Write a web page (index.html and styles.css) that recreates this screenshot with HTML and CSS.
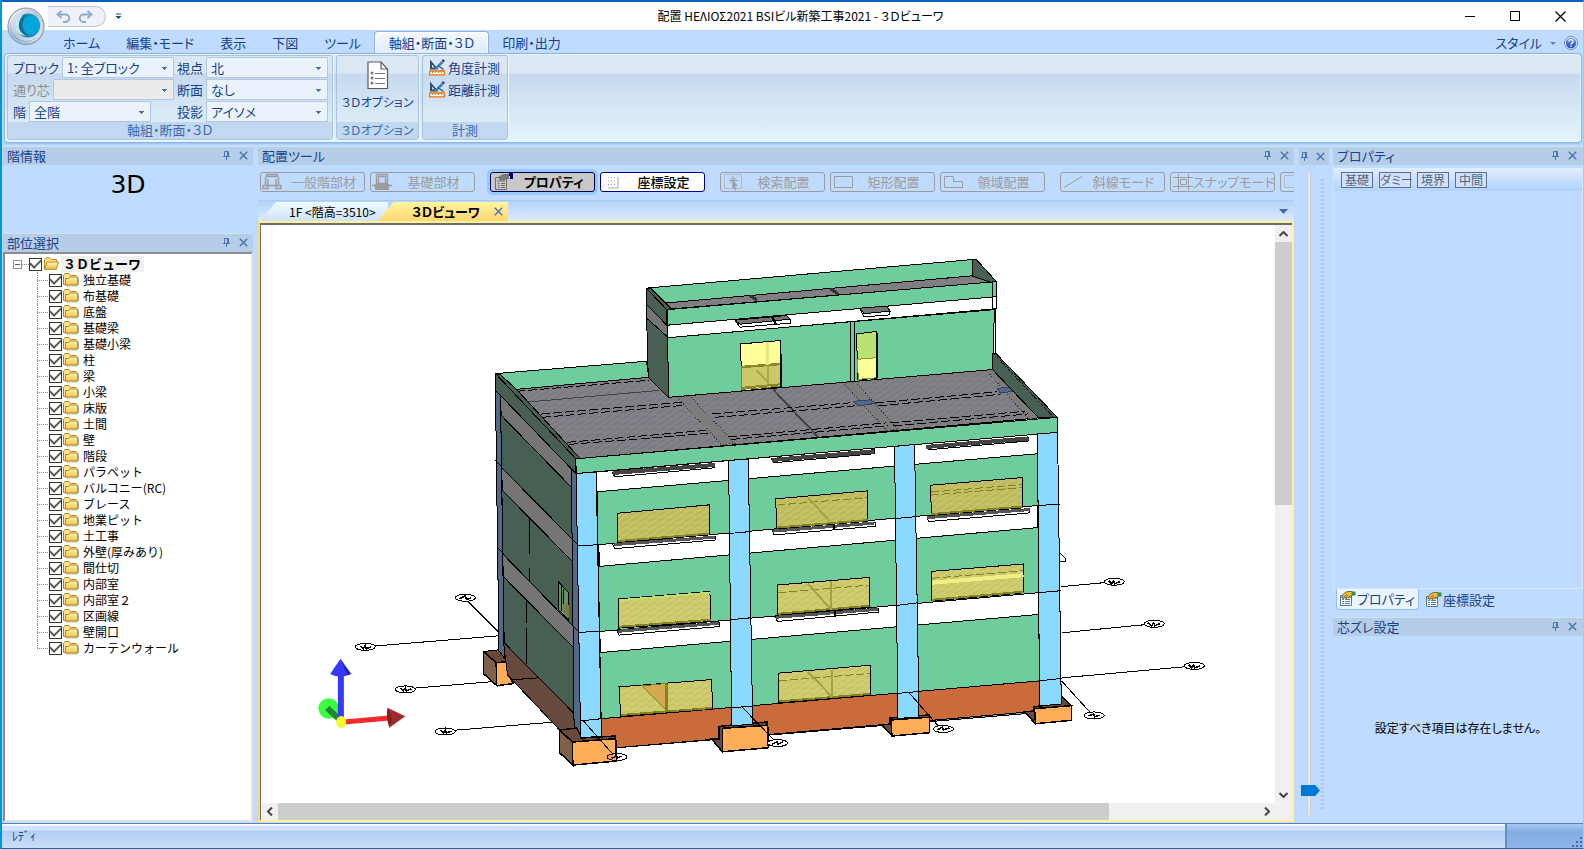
FILE: index.html
```html
<!DOCTYPE html>
<html lang="ja">
<head>
<meta charset="utf-8">
<title>配置 HEΛIOΣ2021 BSIビル新築工事2021 - ３Ｄビューワ</title>
<link rel="stylesheet" href="styles.css">
</head>
<body>
<svg class="defs" aria-hidden="true">
  <defs>
    <linearGradient id="gFold" x1="0" y1="0" x2="0" y2="1"><stop offset="0" stop-color="#fff6c0"/><stop offset="1" stop-color="#f2bf3c"/></linearGradient>
    <linearGradient id="gRing" x1="0" y1="0" x2="1" y2="1"><stop offset="0" stop-color="#f4f6f8"/><stop offset=".5" stop-color="#b9c6d4"/><stop offset="1" stop-color="#eef2f5"/></linearGradient>
    <linearGradient id="gHelp" x1="0" y1="0" x2="0" y2="1"><stop offset="0" stop-color="#6b9cf0"/><stop offset="1" stop-color="#1c46bd"/></linearGradient>
    <pattern id="hatch" width="9" height="6" patternUnits="userSpaceOnUse"><rect width="9" height="6" fill="#828282"/><path d="M0 5L9 1" stroke="#74748e" stroke-width="1.4"/></pattern>
    <pattern id="glass" width="9" height="6" patternUnits="userSpaceOnUse"><rect width="9" height="6" fill="#c4c264"/><path d="M0 5L9 1" stroke="#b5b25c" stroke-width="1.2"/></pattern>
    <pattern id="glass2" width="9" height="6" patternUnits="userSpaceOnUse"><rect width="9" height="6" fill="#cfcd6e"/><path d="M0 5L9 1" stroke="#c2bf68" stroke-width="1.2"/></pattern>
  </defs>
  <symbol id="folder" viewBox="0 0 16 14">
    <path d="M2 12.8h12.5l1-1V5" fill="none" stroke="#a9a9a9"/>
    <path d="M.5 11.5v-9l1.5-2h4l1.5 2h5.5l1 1.2v7.8z" fill="#fbe290" stroke="#b98a1c"/>
    <path d="M2.5 12V5.5h3.3l1-1.5h7.7v8z" fill="url(#gFold)" stroke="#c0901f"/>
  </symbol>
  <symbol id="folder-open" viewBox="0 0 16 14">
    <path d="M1.5 12V2.5L3 .8h3.5L8 2.5h5.5V5" fill="#fbe290" stroke="#b98a1c"/>
    <path d="M1.5 12.3L4 5h11.6l-2.4 7.3z" fill="url(#gFold)" stroke="#b98a1c"/>
  </symbol>
  <symbol id="pin" viewBox="0 0 9 9"><path d="M2.5 5.5V.5h4v5M5.5 1v4M1 5.5h7M4.5 6v3" fill="none" stroke="#4a76b5"/></symbol>
  <symbol id="cross" viewBox="0 0 9 9"><path d="M.8.8l7.400 7.400M8.200.8L.8 8.200" fill="none" stroke="#4a76b5" stroke-width="1.5"/></symbol>
  <symbol id="measure" viewBox="0 0 16 17">
    <path d="M1 .5L9.500 10.500H1zM3 5.500v3h2.500z" fill="#33506a" fill-rule="evenodd"/>
    <path d="M6.500 8l6-6 1.900 1.900-6 5.600-2.600.9z" fill="#3f7fc0"/><path d="M12.500 1.500l1.500-1.500 2 2-1.500 1.500z" fill="#24445f"/><path d="M9.500 7l5 3.500" stroke="#33506a" stroke-width="1.200"/>
    <path d="M.7 12h14.600v3.800H.7z" fill="#fff" stroke="#e87511" stroke-width="1.300"/><path d="M3.500 12v2M6.500 12v2M9.500 12v2M12.500 12v2" stroke="#e87511"/>
  </symbol>
  <symbol id="props" viewBox="0 0 17 16">
    <path d="M1.5 4.500h11v10h-11z" fill="#fff" stroke="#55789f"/><path d="M2 6.500h10" stroke="#7ca0cc" stroke-width="1.500"/>
    <path d="M3 8.500h2M6 8.500h5M3 10.500h2M6 10.500h5M3 12.500h2M6 12.500h5" stroke="#55789f"/>
    <path d="M3 5l3-3.500 3-1h4v4.500l-3 .5-2 2-2-1-2 1z" fill="#f0c238" stroke="#6b4b10" stroke-width=".8"/><path d="M5 6l3-3M7 7l2-3" stroke="#6b4b10" stroke-width=".7"/><path d="M13 .5h3.500v4H13z" fill="#3a8e50"/>
  </symbol>
</svg>

<div class="window">
  <header class="titlebar">
    <div class="quick">
      <button class="qbtn" aria-label="元に戻す"><svg width="15" height="13" viewBox="0 0 15 13"><path d="M5.500 1L1.500 4.500l4 3.500M2 4.500h7.500a3.600 3.600 0 0 1 0 7.500H7" fill="none" stroke="#8fadd0" stroke-width="2"/></svg></button>
      <button class="qbtn" aria-label="やり直し"><svg width="15" height="13" viewBox="0 0 15 13"><path d="M9.500 1l4 3.500-4 3.500M13 4.500H5.500a3.600 3.600 0 0 0 0 7.500H8" fill="none" stroke="#8fadd0" stroke-width="2"/></svg></button>
    </div>
    <button class="qmore" aria-label="カスタマイズ"><svg width="7" height="7" viewBox="0 0 7 7"><path d="M1 1h5" stroke="#15428b"/><path d="M.5 3h6L3.500 6z" fill="#15428b"/></svg></button>
    <h1 class="caption">配置 HEΛIOΣ2021 BSIビル新築工事2021 - ３Ｄビューワ</h1>
    <div class="winbtns">
      <button aria-label="最小化"><svg width="11" height="11"><path d="M0 5.500h10" stroke="#000"/></svg></button>
      <button aria-label="最大化"><svg width="11" height="11"><path d="M.5 .5h9v9h-9z" fill="none" stroke="#000"/></svg></button>
      <button aria-label="閉じる"><svg width="11" height="11"><path d="M.5 .5l10 10M10.500 .5l-10 10" stroke="#000" stroke-width="1.200"/></svg></button>
    </div>
  </header>
  <button class="orb" aria-label="アプリケーション"><svg width="40" height="40" viewBox="0 0 40 40">
    <circle cx="20" cy="21" r="18.500" fill="#8a97a6" opacity=".5"/><circle cx="20" cy="20" r="18" fill="url(#gRing)" stroke="#8795a5"/>
    <path d="M5 15a15.500 15.500 0 0 0 26 16a16 16 0 0 1-26-16z" fill="#4ba9c9" opacity=".6"/>
    <circle cx="22" cy="19.500" r="12" fill="#1690bd"/>
    <path d="M17 9c-6 6-5 16 3 21c-9-1-13-8-10-15c1.500-4 4-6 7-6z" fill="#c5e8f2"/>
    <path d="M21 8.500c-6 5-6 16 3 22.500c-9-2-12-8-11-13c.8-4 4-9 8-9.500z" fill="#10708f"/>
    <ellipse cx="25" cy="19" rx="8.500" ry="9.500" fill="#06a5da"/>
  </svg></button>

  <nav class="tabs">
    <button>ホーム</button><button>編集・モード</button><button>表示</button><button>下図</button><button>ツール</button><button class="active">軸組・断面・３Ｄ</button><button>印刷・出力</button>
    <button class="style">スタイル<i class="arr"></i></button>
    <button class="help" aria-label="ヘルプ"><svg width="14" height="14" viewBox="0 0 14 14"><circle cx="7" cy="7" r="6.500" fill="#eef3fb" stroke="#6f87ac"/><circle cx="7" cy="7" r="5.200" fill="url(#gHelp)"/><path d="M5 5.600a2 2 0 1 1 3 1.600q-1 .6-1 1.400M7 9.600v1.400" fill="none" stroke="#fff" stroke-width="1.400"/></svg></button>
  </nav>

  <section class="ribbon">
    <div class="group">
      <div class="gbody combos">
        <div class="ccol wide">
          <div class="crow"><label for="c1">ブロック</label><select id="c1"><option>1: 全ブロック</option></select></div>
          <div class="crow"><label for="c2" class="off">通り芯</label><select id="c2" disabled><option></option></select></div>
          <div class="crow"><label for="c3">階</label><select id="c3"><option>全階</option></select></div>
        </div>
        <div class="ccol">
          <div class="crow"><label for="c4">視点</label><select id="c4"><option>北</option></select></div>
          <div class="crow"><label for="c5">断面</label><select id="c5"><option>なし</option></select></div>
          <div class="crow"><label for="c6">投影</label><select id="c6"><option>アイソメ</option></select></div>
        </div>
      </div>
      <div class="glabel">軸組・断面・３Ｄ</div>
    </div>
    <div class="group small">
      <div class="gbody"><button class="big"><svg width="22" height="29" viewBox="0 0 22 29"><path d="M1 1h13l6.500 7v19.500H1z" fill="#fff" stroke="#5a5a5a" stroke-width="1.200"/><path d="M14 1v7h6.500" fill="none" stroke="#5a5a5a" stroke-width="1.200"/><g fill="#777"><circle cx="5" cy="12" r="1.500"/><circle cx="5" cy="17" r="1.500"/><circle cx="5" cy="22" r="1.500"/></g><path d="M8 12.500h10M8 17.500h10M8 22.500h10" stroke="#777"/></svg><span>３Ｄオプション</span></button></div>
      <div class="glabel">３Ｄオプション</div>
    </div>
    <div class="group">
      <div class="gbody list">
        <button><svg width="16" height="17"><use href="#measure"/></svg>角度計測</button>
        <button><svg width="16" height="17"><use href="#measure"/></svg>距離計測</button>
      </div>
      <div class="glabel">計測</div>
    </div>
  </section>

  <main class="work">
    <aside class="left">
      <section class="dock info">
        <h2>階情報<span class="dbtn"><button aria-label="固定"><svg width="9" height="9"><use href="#pin"/></svg></button><button aria-label="閉じる"><svg width="9" height="9"><use href="#cross"/></svg></button></span></h2>
        <p class="floor">3D</p>
      </section>
      <section class="dock parts">
        <h2>部位選択<span class="dbtn"><button aria-label="固定"><svg width="9" height="9"><use href="#pin"/></svg></button><button aria-label="閉じる"><svg width="9" height="9"><use href="#cross"/></svg></button></span></h2>
        <div class="tree">
          <div class="root"><button class="exp" aria-label="折りたたむ"></button><label><input type="checkbox" checked><svg width="16" height="14"><use href="#folder-open"/></svg><b>３Ｄビューワ</b></label></div>
          <ul>
            <li><label><input type="checkbox" checked><svg width="16" height="14"><use href="#folder"/></svg>独立基礎</label></li>
            <li><label><input type="checkbox" checked><svg width="16" height="14"><use href="#folder"/></svg>布基礎</label></li>
            <li><label><input type="checkbox" checked><svg width="16" height="14"><use href="#folder"/></svg>底盤</label></li>
            <li><label><input type="checkbox" checked><svg width="16" height="14"><use href="#folder"/></svg>基礎梁</label></li>
            <li><label><input type="checkbox" checked><svg width="16" height="14"><use href="#folder"/></svg>基礎小梁</label></li>
            <li><label><input type="checkbox" checked><svg width="16" height="14"><use href="#folder"/></svg>柱</label></li>
            <li><label><input type="checkbox" checked><svg width="16" height="14"><use href="#folder"/></svg>梁</label></li>
            <li><label><input type="checkbox" checked><svg width="16" height="14"><use href="#folder"/></svg>小梁</label></li>
            <li><label><input type="checkbox" checked><svg width="16" height="14"><use href="#folder"/></svg>床版</label></li>
            <li><label><input type="checkbox" checked><svg width="16" height="14"><use href="#folder"/></svg>土間</label></li>
            <li><label><input type="checkbox" checked><svg width="16" height="14"><use href="#folder"/></svg>壁</label></li>
            <li><label><input type="checkbox" checked><svg width="16" height="14"><use href="#folder"/></svg>階段</label></li>
            <li><label><input type="checkbox" checked><svg width="16" height="14"><use href="#folder"/></svg>パラペット</label></li>
            <li><label><input type="checkbox" checked><svg width="16" height="14"><use href="#folder"/></svg>バルコニー(RC)</label></li>
            <li><label><input type="checkbox" checked><svg width="16" height="14"><use href="#folder"/></svg>ブレース</label></li>
            <li><label><input type="checkbox" checked><svg width="16" height="14"><use href="#folder"/></svg>地業ピット</label></li>
            <li><label><input type="checkbox" checked><svg width="16" height="14"><use href="#folder"/></svg>土工事</label></li>
            <li><label><input type="checkbox" checked><svg width="16" height="14"><use href="#folder"/></svg>外壁(厚みあり)</label></li>
            <li><label><input type="checkbox" checked><svg width="16" height="14"><use href="#folder"/></svg>間仕切</label></li>
            <li><label><input type="checkbox" checked><svg width="16" height="14"><use href="#folder"/></svg>内部室</label></li>
            <li><label><input type="checkbox" checked><svg width="16" height="14"><use href="#folder"/></svg>内部室２</label></li>
            <li><label><input type="checkbox" checked><svg width="16" height="14"><use href="#folder"/></svg>区画線</label></li>
            <li><label><input type="checkbox" checked><svg width="16" height="14"><use href="#folder"/></svg>壁開口</label></li>
            <li><label><input type="checkbox" checked><svg width="16" height="14"><use href="#folder"/></svg>カーテンウォール</label></li>
          </ul>
        </div>
      </section>
    </aside>

    <section class="center">
      <h2 class="dockhead">配置ツール<span class="dbtn"><button aria-label="固定"><svg width="9" height="9"><use href="#pin"/></svg></button><button aria-label="閉じる"><svg width="9" height="9"><use href="#cross"/></svg></button></span></h2>
      <div class="toolbar">
        <button class="tool" disabled><svg width="22" height="18" viewBox="0 0 22 18"><path d="M5.500 1.500h11v2h-11zM4.500 4v9M17.500 4v9M7 6v6M15 6v6M2 12.500h5v3H2zM15 12.500h5v3h-5zM7 12.500h8" fill="none" stroke="#9c9c9c" stroke-width="1.400"/></svg><span>一般階部材</span></button>
        <button class="tool" disabled><svg width="22" height="18" viewBox="0 0 22 18"><path d="M5.500 1.500h11v9h-11zM7.500 3.500v7M14.500 3.500v7M7 3.500h8M1 12.500h20" fill="none" stroke="#9c9c9c" stroke-width="1.400"/><path d="M4 11h14v6H4z" fill="#9c9c9c"/></svg><span>基礎部材</span></button>
        <i class="sep"></i>
        <button class="tool pressed"><svg width="22" height="18" viewBox="0 0 22 18"><path d="M4.500 4.500h11v12h-11zM6 8h8M7 10.500h1.500M10 10.500h4M7 12.500h1.500M10 12.500h4M7 14.500h1.500M10 14.500h4" fill="none" stroke="#6e6e6e"/><path d="M7 4l5-3h6v5h-3l-2 2-2-1-2 1z" fill="#777"/><path d="M18 0h4v6h-3V3h-1z" fill="#000080"/></svg><span>プロパティ</span></button>
        <button class="tool on"><svg width="22" height="18" viewBox="0 0 22 18"><path d="M7 4.500h9M7 8h9M7 11.500h9" stroke="#999" stroke-dasharray="1 2"/><path d="M17 4v11H7" fill="none" stroke="#aaa"/></svg><span>座標設定</span></button>
        <i class="sep"></i>
        <button class="tool" disabled><svg width="22" height="18" viewBox="0 0 22 18"><path d="M3.500 1.500h17v14h-17z" fill="none" stroke="#9c9c9c" stroke-dasharray="1 1"/><path d="M12 3v9M8 7.500h9M9 4.500l6 6M15 4.500l-6 6" stroke="#9c9c9c"/><path d="M12 8l5 5-3 .3L15.500 17l-1.500.5-1.200-3L11 16z" fill="#9c9c9c"/></svg><span>検索配置</span></button>
        <button class="tool" disabled><svg width="22" height="18" viewBox="0 0 22 18"><path d="M3.500 3.500h18v11h-18z" fill="none" stroke="#9c9c9c"/></svg><span>矩形配置</span></button>
        <button class="tool" disabled><svg width="22" height="18" viewBox="0 0 22 18"><path d="M3.500 3.500h9v5h9v6h-18z" fill="none" stroke="#9c9c9c"/></svg><span>領域配置</span></button>
        <i class="sep"></i>
        <button class="tool" disabled><svg width="22" height="18" viewBox="0 0 22 18"><path d="M3 14.500L21 3.500" stroke="#9c9c9c"/></svg><span>斜線モード</span></button>
        <button class="tool" disabled><svg width="22" height="18" viewBox="0 0 22 18"><path d="M7.500 1v16M17.500 1v16M2 4.500h20M2 13.500h20M9.500 6.500h6v5h-6z" fill="none" stroke="#9c9c9c"/></svg><span>スナップモード</span></button>
        <button class="tool" disabled aria-label="範囲"><svg width="22" height="18" viewBox="0 0 22 18"><path d="M3.500 2.500h20v12h-20z" fill="none" stroke="#9c9c9c" stroke-dasharray="1 1"/></svg></button>
      </div>
      <div class="doctabs">
        <button class="doc">1F &lt;階高=3510&gt;</button>
        <button class="doc cur">３Ｄビューワ<svg width="9" height="9"><use href="#cross"/></svg></button>
        <button class="drop" aria-label="一覧"><svg width="9" height="5"><path d="M0 0h9L4.500 5z" fill="#3f6cae"/></svg></button>
      </div>
      <div class="viewer">
        <svg class="scene" viewBox="262 225 1012 576" preserveAspectRatio="xMinYMin meet" shape-rendering="crispEdges" role="img" aria-label="建物の３Ｄビュー">
          <g stroke="#000" stroke-width="1" fill="none">
            <path d="M366 646L499 635M406 688L538 677M446 730L580 719M469 601L504 636M1060 586L1103 582M1061 632L1143 624M1061 677L1183 666M1061 680L1090 712"/>
            <path d="M1059 551.700l6 6v3.500h-6z" fill="#fff"/>
          </g>
          <g stroke="#000">
            <path d="M484 650.700L499.500 649 508 661 496.700 661.700z" fill="#68493a"/>
            <path d="M484 650.700L496.700 661.700 497.300 684.700 484 672.700z" fill="#80604a" stroke-width="1.500"/>
            <path d="M496.700 661.700L508 661 508.300 673 514 682.700 497.300 684.700z" fill="#ffad57" stroke-width="1.500"/>
            <path d="M504 641L581 717V735L560 729 508 674z" fill="#654a3d"/>
            <path d="M501 395L572 468 575 713 504.700 642z" fill="#486054"/>
            <path d="M501 395L572 468V487L501.700 415zM502 467L574 540V562L503 490zM503 553L574 626V647L504 576z" fill="#757575"/>
            <path d="M496 390L501 395 504.700 657 499.500 650z" fill="#526a87"/>
            <path d="M571.700 468L576.500 473 581 737 574.500 728z" fill="#526a87"/>
            <path d="M496 460L503 467M498 547L504 553M571 537L577 543M573 625L579 631"/>
            <path d="M529.500 517V553M530.300 567V580M526.700 598V622M527 627V663M538 677L511 679"/>
            <path d="M558.500 580.700L569.300 592.300V620L558.500 608z" fill="#668f63"/><path d="M561.500 585V610M564 588V603" fill="none"/><path d="M564 604h5v13l-5-6z" fill="#777a45" stroke="none"/>
            <path d="M496 373.300L646.700 361 649 377 517 389z" fill="#6fcc9d"/>
            <path d="M517 389L649 377 668.500 397 992 369.300 1038 417.500 580 458z" fill="url(#hatch)"/>
          </g>
          <g stroke="#333" fill="#7c7c7c">
            <path d="M676.700 396.500L690 395.500 735 443 721.700 444zM842.700 382.500L855 381.500 898 429 886.700 430zM986 370L992 369.300 1038 417.500 1028 418.500z" stroke-dasharray="1 2"/>
            <path d="M773 389L818 436.500" stroke="#444" stroke-width="2"/>
            <g fill="none" stroke="#000" stroke-dasharray="9 3"><path d="M541.700 413.700L681.700 402M542 417L684 405M567 442L706 430M569 444L708 433M711.700 413.700L850 402.500M715 417L855 405.500M875 402.500L997 391.500M878 405.500L1000 394M728 436.500L886 422.500M731 439L888 425.500M890 422.500L1024 411M893 425.500L1028 413.500"/><path d="M517 391L649 380"/></g>
            <path d="M528 401.700L660 390" stroke="#444"/>
            <path d="M853 401L870 399.500 876 403 858 405.500zM996.700 388L1010 387 1015 390.700 1000 392.700z" fill="#526a87" stroke="#30455f"/>
          </g>
          <g stroke="#000">
            <path d="M992 353.700H996L1056.700 417 1038 417.500 992 369.300z" fill="#486054"/><path d="M994 354L1053 417" stroke-dasharray="1 1" fill="none"/>
            <path d="M496 373.300L501 374.500 517 389 580.500 458 576.300 458.300V473L496 390z" fill="#486054"/><path d="M496 373.300L576.300 458.300" fill="none"/>
            <path d="M646.500 304L668 325 668.500 397 648.500 377z" fill="#486054"/>
            <path d="M646.500 304L668 325V337L647 318z" fill="#757575"/>
            <path d="M668 337L994 309.500 992 369.300 668.500 397z" fill="#6fcc9d"/><path d="M995 309V354" stroke-width="1.500"/>
            <path d="M668 325L996 296V308.500L668 337.500z" fill="#fff"/>
            <path d="M646.500 288L972 259.500V275.700L664 303z" fill="#6fcc9d"/>
            <path d="M664 303L972 275.700 992 282 668 309z" fill="url(#hatch)"/>
            <path d="M750 295.500L757 300M830 288.500L838 294" stroke="#333" stroke-width="3"/>
            <path d="M972 259.500H976L996 281.500 990 282 972 276z" fill="#486054"/>
            <path d="M646.500 288L651 288 672 309 667 309.500V325L646.500 304z" fill="#486054"/><path d="M646.500 288L667 309.500" fill="none"/>
            <path d="M667.500 309.500L996 281.500V296.500L667.500 325z" fill="#6fcc9d"/><path d="M992 282V309" />
            <path d="M735 320L786.700 315.300 790 319V323L740 327z" fill="#fff"/><path d="M735 320L786.700 315.300 790 319 740 324z" fill="#757575"/><path d="M772 316.500l4 8" stroke-width="2"/>
            <path d="M859.300 308L886.700 306 889.700 311V314.700L864 316.700z" fill="#fff"/><path d="M859.300 308L886.700 306 889.700 311 864 313.500z" fill="#757575"/>
            <path d="M850 321.500V382M854 321V381"/>
            <path d="M740.700 343.700L780.700 340.300V386.700L741.700 390.700z" fill="#ffff98"/><path d="M741.500 366L780 363V386L742 389z" fill="#cbc865" stroke="#86831f"/><path d="M741.500 367L780 364M742 387.500L780 384" stroke="#8b872a" stroke-width="2"/><path d="M756 370L768 382M768 366V384" stroke="#a9a64c" stroke-width="2"/><path d="M766 342.500h3v22h-3z" fill="#e8e584" stroke="none"/><path d="M781 354V387" stroke-width="2"/>
            <path d="M856.300 333.700L876.300 331.300 876.700 378 857.700 379.300z" fill="#b9e36e"/><path d="M857.500 359L876 357.500V377.500L858 379z" fill="#ffff98" stroke="#97932c"/><path d="M876.500 333V378" stroke-width="2"/>
          </g>
          <g stroke="#000">
            <path d="M597 471.500L1037 433.500 1039 711.500 602 748z" fill="#6fcc9d"/>
            <path d="M597 471.500L1037 433.500V453.300L597 491.300zM599 544L1037 505V527L600 565.700zM600 630.700L1038 592V613.700L601 651.700z" fill="#fff"/>
            <path d="M602 717.700L1039 680V710L602 748z" fill="#c96b3b"/>
            <path d="M612.700 471.700L715 463.300V467.300L615 476.300zM771.700 458.300L874 449.300V453.300L773.500 462.300zM926 445L1028.300 436.700V440.500L928.300 449.300z" fill="#fff"/>
            <path d="M613 472.500L715 464.500M772 459.500L874 451M926 446.500L1028 438" stroke="#444" stroke-width="4"/>
            <path d="M617.300 512.700L709.300 504.300V534.300L617.300 541.700zM775.700 498.300L867.700 490.300V520.700L776.700 528.300zM930.300 484.700L1022.300 477V507.300L931 514.700z" fill="url(#glass)"/>
            <path d="M618.300 598.300L710 590.700 711 620.700 619 627.300zM777.300 584.300L869 576.700 869.300 606 777.700 614.300zM931.300 570.700L1023.300 563.300V592L931.700 600.300zM619.300 686L711.700 678.700 712.700 708 621 715.300zM778.300 672.300L870.300 664.300V694L778.700 701.700z" fill="url(#glass2)"/>
            <g fill="none" stroke="#86831f" stroke-width="1.500"><path d="M618 540.500L709 533M777 527L868 519.500M931 513.500L1022 506M619 626L711 619M778 613L869 605M932 599L1023 591M621 714L712 707M779 700.500L870 693" stroke-width="2"/><path d="M777 504.500L867 497M931 491.500L1022 484M931 494.500L1022 487M778 592L868 584.500M932 577.500L1023 570M779 680L870 672.500" stroke-dasharray="8 3" stroke-width="1"/></g>
            <path d="M619 599.500L710 592" stroke="#b9e36e" stroke-width="2"/><path d="M932 582L1023 574.500" stroke="#f0ee85" stroke-width="4"/>
            <path d="M808 497L829 520M808 583L831 609M831 580V609M808 671L832 696M832 669V696" stroke="#a5a245" stroke-width="2"/>
            <path d="M642 685L667 682.500V710z" fill="#d2a950" stroke="#86831f"/><path d="M666.500 683V710" stroke="#86831f" stroke-width="3"/>
            <g fill="#fff"><path d="M613 543.300L716 535.700V539.300L615 548zM772.300 530L875 521.700V525.700L774 534.300zM926.700 516.700L1029.300 508.300V512.300L928.300 521zM617.700 630L720 622V625.700L619.300 634.300zM775.700 615.700L878.300 607.300V611.300L777.300 620.700z"/></g>
            <path d="M614 544L715 536.500M773 530.500L874 522.500M927 517L1029 509M618 630.500L719 622.500M776 616.500L878 608.500" stroke="#555" stroke-width="3"/><path d="M834 524v5M835 610v5" stroke-width="2"/>
            <path d="M576.300 458.300L1056.700 417 1057 432 576.500 473z" fill="#6fcc9d"/>
          </g>
          <g stroke="#000" stroke-width="1.500">
            <path d="M560 729L577 727 582 737 616 735V738L572.700 741z" fill="#68493a"/><path d="M560 729L572.700 741 573.300 764 560 751.700z" fill="#80604a"/><path d="M572.700 741L616 737.700 616.700 760 573.300 764z" fill="#ffad57"/>
            <path d="M711.700 738H719L719.300 725.500 732 724 767 721V725L722.700 727.300V751z" fill="#68493a"/><path d="M722.700 727.300L767.700 724.300 768.300 746.700 722.700 750.700z" fill="#ffad57"/>
            <path d="M881.700 724L890 723V717L929 714V717L892 719.500V735z" fill="#68493a"/><path d="M890.700 719L929 716.300V731.700L891.700 735z" fill="#ffad57"/>
            <path d="M1024 711L1033 710V706L1060 702V694L1071 704.700 1035 708V722.700z" fill="#68493a"/><path d="M1034 707.700L1071 704.700V719.300L1035 722.700z" fill="#ffad57"/>
          </g>
          <g stroke="#000" fill="#8cd9ff">
            <path d="M576.500 473L596.500 471.500 601.700 735 581 737zM728.700 460L748.300 458.500 752.700 723 731.700 725zM894.300 446L914.300 444 918.700 716 897.700 717.500zM1037 433.500L1057 432 1060.700 703 1039 705z"/>
            <path d="M577 545.500L599 544M728 533L750 531M894 518L917 516M1037 505L1059 503.500M579 631.500L600 630.700M730 619L751 617M896 604.700L918 602M1038 592L1060 590M580 720L602 717.700M731 707L753 705M897 692.500L919 690.500M1039 680L1061 677.500"/>
            <path d="M583 719L613 753M742 706L774 739M908 691L938 725" fill="none"/>
          </g>
          <g stroke="#000" fill="#fff">
            <ellipse cx="366" cy="646" rx="10" ry="3.500"/><ellipse cx="406" cy="688.500" rx="10" ry="3.500"/><ellipse cx="446" cy="730.500" rx="10" ry="3.500"/><ellipse cx="466" cy="597" rx="10" ry="3.500"/>
            <ellipse cx="617.500" cy="756" rx="10" ry="3.500" fill="none"/><ellipse cx="777.500" cy="742" rx="10" ry="3.500"/><ellipse cx="943" cy="728" rx="10" ry="3.500"/><ellipse cx="1093.500" cy="714.500" rx="10" ry="3.500"/>
            <ellipse cx="1113.500" cy="581" rx="10" ry="3.500"/><ellipse cx="1153.500" cy="623" rx="10" ry="3.500"/><ellipse cx="1193.500" cy="665" rx="10" ry="3.500"/>
            <path d="M361 645l3 3 2-3 1 3 5-2M401 687l3 3 2-3 1 3 5-2M441 729l3 3 2-3 1 3 5-2M460 598l6-3 1 4 5-2M612 757l5-2 1 2 4-2M772 743l5-2 1 2 5-2M937 729l5-3 1 3 6-2M1088 715l5-2 1 3 5-2M1108 580l3 3 2-3 1 3 5-2M1147 622l4 3 2-3 1 3 5-2M1188 664l3 3 2-3 1 3 5-2" fill="none" stroke-width="1.500"/>
          </g>
          <g shape-rendering="auto">
            <circle cx="329.500" cy="707.500" r="10.300" fill="#3dfb3d"/><path d="M328 707L340 718" stroke="#1f8a35" stroke-width="6"/>
            <path d="M341.700 673V718" stroke="#3838fb" stroke-width="6"/><path d="M341.300 658L352 673Q341 678 331 673z" fill="#3838fb"/><path d="M342 660l10 13-4 1z" fill="#2424a5"/>
            <path d="M345 721L390 717" stroke="#f62a2a" stroke-width="5"/><path d="M388.300 706.700L406 715.300 390 726.700 391 716z" fill="#9d2b2b"/><path d="M388.300 706.700q-2 8 1.700 20l3-10z" fill="#7b1f1f"/>
            <ellipse cx="342" cy="721" rx="5" ry="6" fill="#fbfb2c"/>
          </g>
        </svg>
        <div class="vbar"><button aria-label="上へ"><svg width="9" height="6"><path d="M.5 5L4.500 1l4 4" fill="none" stroke="#444" stroke-width="2"/></svg></button><i></i><button aria-label="下へ"><svg width="9" height="6"><path d="M.5 1L4.500 5l4-4" fill="none" stroke="#444" stroke-width="2"/></svg></button></div>
        <div class="hbar"><button aria-label="左へ"><svg width="6" height="9"><path d="M5 .5L1 4.500l4 4" fill="none" stroke="#444" stroke-width="2"/></svg></button><i></i><button aria-label="右へ"><svg width="6" height="9"><path d="M1 .5l4 4-4 4" fill="none" stroke="#444" stroke-width="2"/></svg></button></div>
        <div class="corner"></div>
      </div>
    </section>

    <section class="zoomcol">
      <h2 class="dockhead"><span class="dbtn"><button aria-label="固定"><svg width="9" height="9"><use href="#pin"/></svg></button><button aria-label="閉じる"><svg width="9" height="9"><use href="#cross"/></svg></button></span></h2>
      <div class="slider"><input type="range" aria-label="縮尺" min="0" max="100" value="97"><i class="ticks"></i></div>
    </section>

    <aside class="right">
      <section class="dock props">
        <h2>プロパティ<span class="dbtn"><button aria-label="固定"><svg width="9" height="9"><use href="#pin"/></svg></button><button aria-label="閉じる"><svg width="9" height="9"><use href="#cross"/></svg></button></span></h2>
        <div class="pane"><div class="ptools"><button>基礎</button><button>ダミー</button><button>境界</button><button>中間</button></div></div>
        <div class="ptabs"><button class="cur"><svg width="17" height="16"><use href="#props"/></svg>プロパティ</button><button><svg width="17" height="16"><use href="#props"/></svg>座標設定</button></div>
      </section>
      <section class="dock offset">
        <h2>芯ズレ設定<span class="dbtn"><button aria-label="固定"><svg width="9" height="9"><use href="#pin"/></svg></button><button aria-label="閉じる"><svg width="9" height="9"><use href="#cross"/></svg></button></span></h2>
        <p class="msg">設定すべき項目は存在しません。</p>
      </section>
    </aside>
  </main>

  <footer class="status"><span>ﾚﾃﾞｨ</span><div class="grip"><svg width="12" height="12"><path d="M9 1h2v2H9zM5 5h2v2H5zM9 5h2v2H9zM1 9h2v2H1zM5 9h2v2H5zM9 9h2v2H9z" fill="#46699f"/></svg></div></footer>
</div>
</body>
</html>
```
FILE: styles.css
```css
* { box-sizing: border-box; }
html, body { height: 100%; }
body {
  margin: 0;
  font: 13px/18px "Noto Sans CJK JP", "Open Sans", sans-serif;
  font-feature-settings: "palt";
  color: #15428b;
  background: #bfdbff;
}
button, select, input { font: inherit; font-feature-settings: inherit; color: inherit; margin: 0; }
button { border: 0; padding: 0; background: none; white-space: nowrap; }
h1, h2, p, ul { margin: 0; padding: 0; font-size: inherit; font-weight: normal; }
svg { flex: none; display: block; }
.defs { position: absolute; width: 0; height: 0; }

.window {
  position: relative;
  display: flex;
  flex-direction: column;
  height: 100vh;
  border-top: 2px solid #0a5fc0;
  border-left: 2px solid #0094dc;
  border-right: 1px solid #a9c8ee;
  border-bottom: 1px solid #0a6fb8;
}

/* title bar */
.titlebar { position: relative; flex: none; display: flex; align-items: center; height: 28px; padding-left: 46px; background: #fff; }
.quick { display: flex; align-items: center; gap: 7px; height: 21px; padding: 0 12px 0 8px; border: 1px solid #b9c4d3; border-left: 0; border-radius: 0 11px 11px 0; background: #eef1f6; }
.qbtn { width: 15px; }
.qmore { padding: 0 9px; }
.caption { position: absolute; left: 0; right: 0; text-align: center; font-size: 12px; color: #000; pointer-events: none; padding-left: 16px; }
.winbtns { display: flex; margin-left: auto; }
.winbtns button { width: 45px; display: flex; justify-content: center; }
.orb { position: absolute; left: 4px; top: 4px; }

/* ribbon tabs */
.tabs { display: flex; flex: none; align-items: stretch; height: 24px; padding: 1px 4px 0 48px; line-height: 20px; }
.tabs button { padding: 0 12px; border: 1px solid transparent; border-bottom: 0; }
.tabs .active { min-width: 115px; border-color: #8db2e3; border-radius: 4px 4px 0 0; background: linear-gradient(#f4f9ff, #dfeaf8); box-shadow: inset 0 0 2px 1px #fff; }
.tabs .style { margin-left: auto; padding: 0; display: flex; align-items: center; gap: 8px; }
.tabs .help { padding: 0 0 0 6px; }
.arr { border: 3px solid transparent; border-top-color: #5b84bd; border-bottom: 0; }

.ribbon {
  display: flex; flex: none; gap: 3px; height: 90px; margin: -1px 1px 0 2px; padding: 1px 2px 2px;
  border: 1px solid #8db2e3; border-radius: 4px;
  background: linear-gradient(#dce7f4 0 19px, #c7d9ee 20px, #e3f4fd);
  box-shadow: inset 0 0 0 1px #e8f5ff, 0 1px 2px #8fc4e8;
}
.group { display: flex; flex-direction: column; border: 1px solid #a9c2de; border-radius: 3px; box-shadow: 1px 1px 0 #eff6fd; overflow: hidden; }
.gbody { flex: 1; display: flex; }
.glabel { height: 17px; line-height: 16px; text-align: center; color: #3e6aaa; background: #c1d8f0; }
.small { font-size: 12px; }
.combos { padding: 1px 4px 0 5px; gap: 3px; }
.ccol { display: flex; flex-direction: column; gap: 1px; }
.wide { width: 161px; }
.crow { display: flex; align-items: center; gap: 3px; height: 21px; line-height: 20px; white-space: nowrap; }
.off { color: #8d8d8d; }
select {
  appearance: none; flex: 0 1 122px; width: 122px; min-width: 0; height: 21px; padding: 0 14px 0 4px; border: 1px solid #b3c7e1; border-radius: 0;
  background: linear-gradient(#4a6ea5, #4a6ea5) no-repeat right 6px top 9px / 5px 1px, linear-gradient(#4a6ea5, #4a6ea5) no-repeat right 7px top 10px / 3px 1px, linear-gradient(#4a6ea5, #4a6ea5) no-repeat right 8px top 11px / 1px 1px, #eaf2fb;
}
select:disabled { background-color: #ebebeb; opacity: 1; }
.big { display: flex; flex-direction: column; align-items: center; gap: 3px; width: 81px; padding-top: 5px; }
.list { flex-direction: column; gap: 5px; padding: 3px 7px 0 6px; }
.list button { display: flex; align-items: center; gap: 3px; height: 17px; }

/* docked panes */
.work { flex: 1; display: flex; min-height: 0; padding: 3px 0 1px 1px; }
.dock { display: flex; flex-direction: column; }
.dock h2, .dockhead { display: flex; align-items: center; flex: none; height: 19px; line-height: 17px; padding: 0 5px 1px 4px; background: #b6cde7; border-top: 1px solid #cfe2f8; white-space: nowrap; }
.dbtn { display: flex; gap: 8px; margin-left: auto; }
.left { width: 250px; display: flex; flex-direction: column; }
.info { height: 87px; }
.floor { padding-top: 8px; text-align: center; font: 25px/24px "DejaVu Sans", sans-serif; color: #000; }
.parts { flex: 1; min-height: 0; }
.tree { flex: 1; min-height: 0; overflow: hidden; padding: 2px 0 0 8px; background: #fff; border: 2px solid #8c8c8c; border-right-color: #dfe3e8; border-bottom-color: #dfe3e8; font-size: 12px; line-height: 16px; color: #000; font-feature-settings: normal; }
.tree label { display: flex; align-items: center; height: 16px; }
.tree label svg { margin-right: 4px; }
.root { display: flex; align-items: center; }
.root label::before { content: ""; width: 7px; border-top: 1px dotted #888; }
.root b { background: #f0f0f0; padding: 0 3px 0 2px; margin-left: -2px; font-size: 13px; }
.exp { width: 9px; height: 9px; border: 1px solid #919191; background: linear-gradient(#3b5fb5, #3b5fb5) no-repeat center / 5px 1px, #fff; }
.tree input { appearance: none; width: 13px; height: 13px; margin-right: 1px; border: 1px solid #333; background: #fff; display: grid; place-items: center; }
.tree input::after { content: ""; width: 9px; height: 5px; border: solid #555; border-width: 0 0 2px 2px; rotate: -45deg; margin-top: -3px; }
.tree ul { list-style: none; margin-left: 24px; }
.tree li { position: relative; padding-left: 12px; }
.tree li::before { content: ""; position: absolute; left: 0; top: 8px; width: 11px; border-top: 1px dotted #888; }
.tree li::after { content: ""; position: absolute; left: 0; top: 0; height: 100%; border-left: 1px dotted #888; }
.tree li:last-child::after { height: 8px; }

.center { flex: 1; min-width: 0; display: flex; flex-direction: column; margin-left: 5px; }
.toolbar { display: flex; flex: none; align-items: center; gap: 5px; height: 31px; padding: 3px 0 1px 2px; overflow: hidden; margin-bottom: 4px; }
.sep { width: 5px; flex: none; }
.tool { flex: none; display: flex; align-items: center; width: 105px; height: 20px; border: 1px solid #9c9c9c; border-radius: 3px; color: #9c9c9c; }
.tool span { flex: 1; text-align: center; }
.tool.on { background: #fff; border-color: #000080; color: #000; font-weight: 500; }
.tool.pressed { background: #c8c8c8; border-color: #000050; color: #000; font-weight: 700; box-shadow: 0 0 0 3px #99c9fb; }
.doctabs { display: flex; flex: none; height: 21px; padding: 1px 6px 0 2px; border-top: 1px solid #a9caf2; background: linear-gradient(#b3d3fb, #ddebfd); color: #000; font-size: 12px; }
.doc { height: 19px; padding: 0 12px 0 29px; background: linear-gradient(#eefcff, #cfe2fa); clip-path: polygon(16px 0, 100% 0, 100% 100%, 0 100%); }
.doc.cur { display: flex; align-items: center; gap: 14px; margin-left: -10px; padding: 0 5px 0 34px; font-size: 13px; font-weight: 700; background: linear-gradient(#fff59a, #ffd675); }
.drop { margin-left: auto; }
.viewer { flex: 1; display: grid; grid-template: minmax(0, 1fr) 17px / minmax(0, 1fr) 17px; min-height: 0; border: 2px solid #fff197; border-left-color: #ffd877; background: #fff; box-shadow: inset 1px 2px 0 #6d6d6d; padding: 2px 0 0 1px; }
.scene { width: 100%; height: 100%; min-height: 0; }
.vbar, .hbar { display: flex; background: #f0f0f0; }
.vbar { flex-direction: column; }
.vbar button { height: 17px; display: grid; place-items: center; }
.hbar button { width: 17px; display: grid; place-items: center; }
.vbar i { height: 263px; background: #cdcdcd; margin-bottom: auto; }
.hbar i { width: 82%; background: #cdcdcd; margin-right: auto; }
.corner { background: #f0f0f0; }

.zoomcol { width: 30px; margin-left: 5px; display: flex; flex-direction: column; }
.zoomcol .dbtn { gap: 7px; }
.zoomcol h2 { padding: 0 4px 0 0; }
.slider { flex: 1; display: flex; padding: 9px 0 7px 2px; min-height: 0; }
.slider input { appearance: none; writing-mode: vertical-lr; width: 19px; height: 100%; background: linear-gradient(90deg, #cfcfcf 1px, #e7eaea 1px 3px, #cfcfcf 3px) no-repeat 6px 0 / 4px 100%; }
.slider input::-webkit-slider-thumb { appearance: none; width: 19px; height: 11px; background: #0078d7; clip-path: polygon(0 0, 75% 0, 100% 50%, 75% 100%, 0 100%); }
.ticks { width: 3px; margin: 5px 0 4px 1px; background: repeating-linear-gradient(#c3c3c3 0 2px, transparent 2px 4px); }

.right { width: 250px; margin-left: 4px; display: flex; flex-direction: column; }
.props { height: 471px; }
.right h2 { padding-right: 6px; }
.pane { flex: 1; border: 1px solid #d5e6fa; border-top: 0; padding-top: 3px; }
.ptools { display: flex; gap: 6px; height: 23px; padding: 4px 0 0 7px; background: linear-gradient(#e1eeff, #b1d2fc); font-size: 12px; }
.ptools button { width: 32px; height: 16px; border: 1px solid #5d6f8a; color: #556680; line-height: 14px; background: #cfe1f8; }
.ptabs { display: flex; gap: 4px; height: 28px; padding: 0 0 7px 3px; }
.ptabs button { display: flex; align-items: center; gap: 1px; padding: 0 3px 0 2px; }
.ptabs .cur { background: #eaf4ff; border: 1px solid #94bde8; border-top: 0; border-radius: 0 0 4px 4px; }
.offset { flex: 1; }
.msg { margin: auto; font-size: 12px; color: #000; padding-bottom: 2px; }

.status { display: flex; flex: none; align-items: center; height: 25px; border-top: 1px solid #5583c2; background: linear-gradient(#fff 0 1px, #d3e4fa 2px 6px, #b2cff5 7px, #c9defa); padding-left: 10px; color: #15428b; font-size: 12px; }
.grip { margin-left: auto; width: 78px; align-self: stretch; border-left: 2px solid #5f8fcd; background: linear-gradient(#a9c7f0, #84ade2 8px, #8fb5ea); display: flex; align-items: flex-end; justify-content: flex-end; }
```
